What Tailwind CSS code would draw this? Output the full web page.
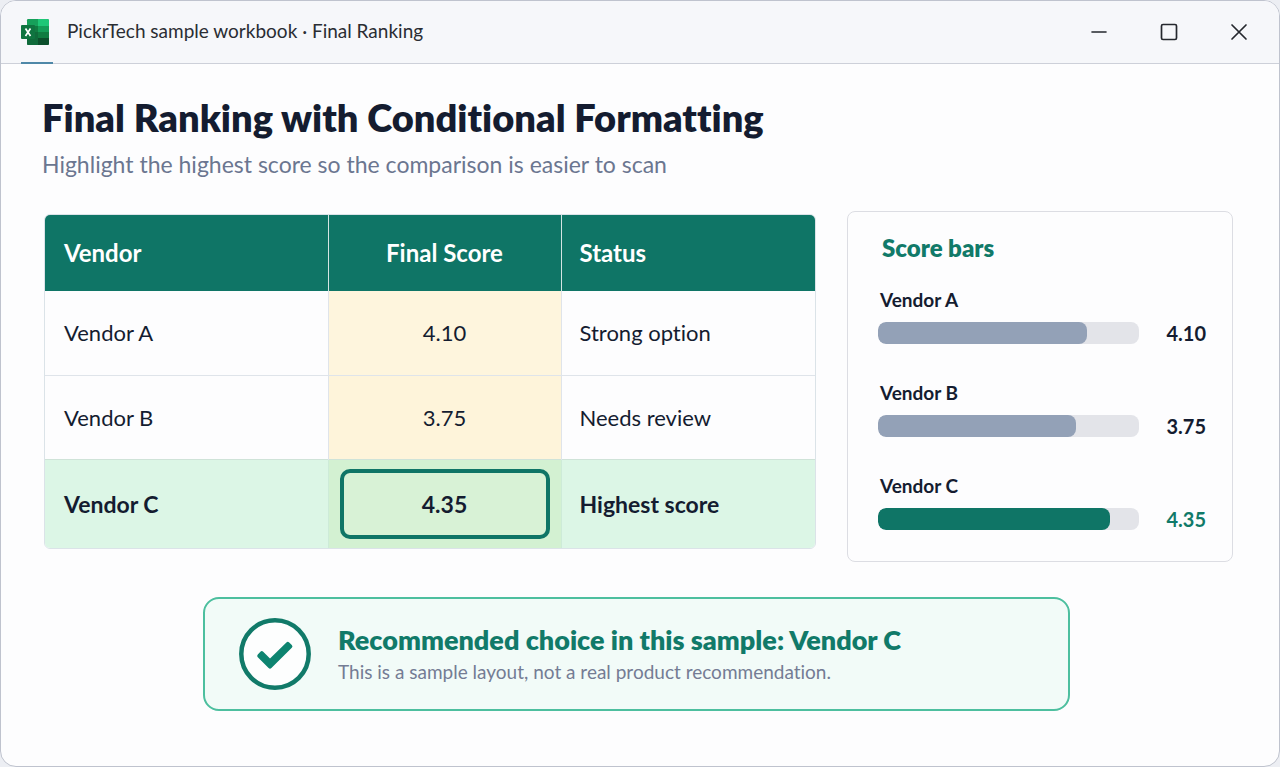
<!DOCTYPE html>
<html lang="en">
<head>
  <meta charset="UTF-8" />
  <meta name="viewport" content="width=device-width, initial-scale=1.0" />
  <title>PickrTech sample workbook · Final Ranking</title>
  <script src="https://cdn.jsdelivr.net/npm/@tailwindcss/browser@4"></script>
</head>
<body class="bg-[#eceef3] font-['Lato','Noto_Sans',sans-serif] [font-variant-ligatures:none] text-[#141c30]">

  <div class="min-h-screen flex flex-col bg-[#fdfdfe] border border-[#bfc3ce] rounded-2xl overflow-hidden">

    <!-- Title bar -->
    <header class="h-[63px] flex justify-between bg-[#f6f7fa] border-b border-[#cdd0d9]">
      <div class="flex items-center pl-5">
        <div class="relative h-full w-8 flex items-center">
          <svg class="w-7 h-[26px]" viewBox="0 0 28 26" aria-hidden="true">
            <rect x="6" y="0" width="22" height="26" rx="1.5" fill="#107c41" />
            <path d="M7.500 0H17V7H6V1.500A1.500 1.500 0 0 1 7.500 0Z" fill="#16a05a" />
            <path d="M17 0H26.500A1.500 1.500 0 0 1 28 1.500V7H17Z" fill="#1fc777" />
            <path d="M6 7H17V13H6Z" fill="#107c41" />
            <path d="M17 7H28V13H17Z" fill="#159d58" />
            <path d="M6 13H17V26H7.500A1.500 1.500 0 0 1 6 24.500Z" fill="#0f6a3a" />
            <path d="M17 19H28V24.500A1.500 1.500 0 0 1 26.500 26H17Z" fill="#0c4f2c" />
            <rect x="0" y="6" width="14" height="14" rx="1" fill="#0f7440" />
            <path d="M4.500 9.500L9.500 17M9.500 9.500L4.500 17" stroke="#fff" stroke-width="1.700" />
          </svg>
          <span class="absolute left-0 -bottom-px w-full h-0.5 bg-[#4f88a8]"></span>
        </div>
        <span class="ml-3.5 pb-0.5 text-[19px] leading-7 text-[#2a2d33]">PickrTech sample workbook · Final Ranking</span>
      </div>
      <div class="flex text-[#25282e] pr-[5px]">
        <button class="w-[70px] flex items-center justify-center" aria-label="Minimize">
          <svg class="w-[18px] h-[18px]" viewBox="0 0 18 18" fill="none" stroke="currentColor" stroke-width="1.600" stroke-linecap="round"><path d="M2 9H16" /></svg>
        </button>
        <button class="w-[70px] flex items-center justify-center" aria-label="Maximize">
          <svg class="w-[18px] h-[18px]" viewBox="0 0 18 18" fill="none" stroke="currentColor" stroke-width="1.700"><rect x="1.500" y="1.500" width="15" height="15" rx="1.500" /></svg>
        </button>
        <button class="w-[70px] flex items-center justify-center" aria-label="Close">
          <svg class="w-[18px] h-[18px]" viewBox="0 0 18 18" fill="none" stroke="currentColor" stroke-width="1.700" stroke-linecap="round"><path d="M2 2L16 16M16 2L2 16" /></svg>
        </button>
      </div>
    </header>

    <main class="flex-1 pl-[41px] pr-[46px] pt-[30px]">
      <h1 class="text-[38px] leading-[46px] font-extrabold">Final Ranking with Conditional Formatting</h1>
      <p class="mt-2 text-[23px] leading-8 text-[#6b7690]">Highlight the highest score so the comparison is easier to scan</p>

      <div class="mt-[31px] flex items-start gap-[31px]">

        <!-- Ranking table -->
        <div class="flex-1 ml-0.5 mt-[3px] border border-[#dbe3e8] rounded-md overflow-hidden">
          <table class="w-full table-fixed text-[22px]">
            <colgroup>
              <col class="w-[283px]" />
              <col class="w-[233px]" />
              <col />
            </colgroup>
            <thead>
              <tr class="h-[76px] bg-[#0f7566] text-white text-2xl">
                <th class="pl-[19px] text-left font-bold border-r border-[#d5e5e3]">Vendor</th>
                <th class="text-center font-bold border-r border-[#d5e5e3]">Final Score</th>
                <th class="pl-[18px] text-left font-bold">Status</th>
              </tr>
            </thead>
            <tbody>
              <tr class="h-[84px] border-b border-[#dfe4ea]">
                <td class="pl-[19px] border-r border-[#dfe4ea]">Vendor A</td>
                <td class="text-center bg-[#fef5dd] border-r border-[#dfe4ea]">4.10</td>
                <td class="pl-[18px]">Strong option</td>
              </tr>
              <tr class="h-[84px] border-b border-[#cfe3d8]">
                <td class="pl-[19px] border-r border-[#dfe4ea]">Vendor B</td>
                <td class="text-center bg-[#fef4da] border-r border-[#dfe4ea]">3.75</td>
                <td class="pl-[18px]">Needs review</td>
              </tr>
              <tr class="h-[89px] bg-[#dcf6e6] text-[23px] font-bold">
                <td class="pl-[19px] border-r border-[#cdebd8]">Vendor C</td>
                <td class="px-[11px] bg-[#d3f1d2] border-r border-[#cdebd8]">
                  <div class="h-[70px] flex items-center justify-center bg-[#d8f2d6] border-4 border-[#0f7566] rounded-[10px]">4.35</div>
                </td>
                <td class="pl-[18px]">Highest score</td>
              </tr>
            </tbody>
          </table>
        </div>

        <!-- Score bars -->
        <section class="w-[386px] border border-[#dcdde3] rounded-lg pl-[30px] pr-[26px] pt-5 pb-[29px]">
          <h2 class="pl-1 text-2xl font-extrabold text-[#117a69]">Score bars</h2>
          <div id="scoreBars" class="mt-[22px] space-y-[33px]">
            <!-- Filled by the script -->
          </div>
        </section>
      </div>

      <!-- Recommendation -->
      <section class="mt-[35px] ml-[161px] mr-[163px] h-[114px] flex items-center pl-[34px] bg-[#f2fbf8] border-2 border-[#4dbf9f] rounded-2xl">
        <svg class="w-[72px] h-[72px]" viewBox="0 0 72 72" fill="none" aria-hidden="true">
          <circle cx="36" cy="36" r="33.700" fill="#fdfefe" stroke="#117a69" stroke-width="4.500" />
          <path d="M18.800 39.200a2 2 0 0 1 0-2.800l2.600-2.600a2 2 0 0 1 2.800 0L31 40.600L47.400 24.400a2 2 0 0 1 2.800 0l2.600 2.600a2 2 0 0 1 0 2.800L32.400 50a2 2 0 0 1-2.800 0Z" fill="#0d8470" />
        </svg>
        <div class="ml-[27px]">
          <h2 class="text-[27px] leading-9 font-extrabold text-[#117a69]">Recommended choice in this sample: Vendor C</h2>
          <p class="text-[19px] leading-7 text-[#747c94]">This is a sample layout, not a real product recommendation.</p>
        </div>
      </section>
    </main>
  </div>

  <script>
    const scores = [
      { vendor: 'Vendor A', score: '4.10', width: 80, bar: 'bg-[#93a1b7]', text: '' },
      { vendor: 'Vendor B', score: '3.75', width: 76, bar: 'bg-[#93a1b7]', text: '' },
      { vendor: 'Vendor C', score: '4.35', width: 89, bar: 'bg-[#0f7566]', text: 'text-[#117a69]' },
    ];

    document.getElementById('scoreBars').innerHTML = scores.map(s => `
      <div>
        <div class="pl-0.5 text-[19px] leading-7 font-bold">${s.vendor}</div>
        <div class="mt-1.5 h-[26px] flex items-center justify-between">
          <div class="w-[261px] h-[22px] bg-[#e3e4e9] rounded-lg overflow-hidden">
            <div class="h-full rounded-lg ${s.bar}" style="width: ${s.width}%"></div>
          </div>
          <span class="text-xl leading-[26px] font-bold ${s.text}">${s.score}</span>
        </div>
      </div>
    `).join('');
  </script>

</body>
</html>
